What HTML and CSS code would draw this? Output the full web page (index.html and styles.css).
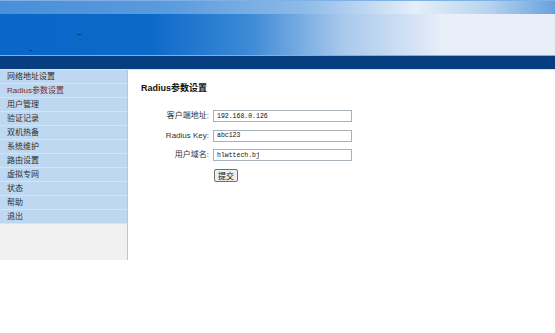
FILE: index.html
```html
<!DOCTYPE html>
<html lang="zh">
  <head>
    <meta charset="UTF-8" />
    <link rel="stylesheet" href="styles.css">
    <title>Radius参数设置</title>
  </head>
  <body>
    <div class="header">
      <div class="header-top"></div>
      <div class="header-main">
        <span class="speck speck-a"></span>
        <span class="speck speck-b"></span>
      </div>
      <div class="header-bar"></div>
    </div>

    <div class="page">
      <div class="sidebar">
        <ul class="menu">
          <li><a href="#">网络地址设置</a></li>
          <li><a href="#" class="visited">Radius参数设置</a></li>
          <li><a href="#">用户管理</a></li>
          <li><a href="#">验证记录</a></li>
          <li><a href="#">双机热备</a></li>
          <li><a href="#">系统维护</a></li>
          <li><a href="#">路由设置</a></li>
          <li><a href="#">虚拟专网</a></li>
          <li><a href="#">状态</a></li>
          <li><a href="#">帮助</a></li>
          <li><a href="#">退出</a></li>
        </ul>
        <div class="sidebar-foot"></div>
      </div>

      <div class="content">
        <h1>Radius参数设置</h1>
        <form class="form">
          <label for="client">客户端地址:</label>
          <input type="text" id="client" value="192.168.0.126" />
          <label for="key">Radius Key:</label>
          <input type="text" id="key" value="abc123" />
          <label for="domain">用户域名:</label>
          <input type="text" id="domain" value="hlwttech.bj" />
          <span></span>
          <div class="actions"><button type="button" class="submit-btn">提交</button></div>
        </form>
      </div>
    </div>
  </body>
</html>
```

FILE: styles.css
```css
body {
  margin: 0;
  padding: 0;
  background-color: white;
  font-family: "Liberation Sans", "Noto Sans CJK SC", sans-serif;
  color: #222;
}

.header-top {
  height: 14px;
  background-image: linear-gradient(
    to right,
    #4a8fd8 0%,
    #5a9ade 30%,
    #8ebbe8 55%,
    #e6eff9 75%,
    #b8d3ef 88%,
    #67a1de 100%
  );
  border-top: 1px solid #7fb0e6;
  box-sizing: border-box;
}

.header-main {
  position: relative;
  height: 41px;
  background-image: linear-gradient(
    to right,
    #0a67c9 0%,
    #0c69c9 27%,
    #3d8ad6 45%,
    #a9c9ec 62%,
    #e8eff9 80%,
    #e8eff9 100%
  );
  border-bottom: 1px solid #9aaabb;
}

.speck {
  position: absolute;
  height: 1px;
  background-color: #123a66;
}

.speck-a {
  left: 77px;
  top: 20px;
  width: 4px;
}

.speck-b {
  left: 29px;
  top: 36px;
  width: 3px;
}

.header-bar {
  height: 13px;
  background-color: #063e80;
  border-bottom: 1px solid #dde3ea;
}

.page {
  display: flex;
}

.sidebar {
  width: 127px;
  border-right: 1px solid #a9c9ea;
  display: flex;
  flex-direction: column;
}

.menu {
  list-style-type: none;
  margin: 0;
  padding: 0;
  background-color: #bed8f1;
}

.menu li {
  height: 13px;
  border-bottom: 1px solid #d3e4f5;
  padding-left: 7px;
  font-size: 8px;
  line-height: 13px;
}

.menu a {
  color: #2e2e2e;
  text-decoration: none;
}

.menu a.visited {
  color: #7b2b2b;
}

.sidebar-foot {
  height: 36px;
  background-color: #f0f0f0;
}

.content {
  flex: 1;
  padding: 12px 0 0 13px;
}

h1 {
  margin: 0 0 16px 0;
  font-size: 9px;
  font-weight: bold;
  line-height: 12px;
  color: #111;
}

.form {
  display: grid;
  grid-template-columns: 68px 139px;
  column-gap: 4px;
  row-gap: 7.5px;
  align-items: center;
}

.form label {
  text-align: right;
  font-size: 8px;
  line-height: 12px;
  color: #333;
}

.form input {
  box-sizing: border-box;
  width: 139px;
  height: 12px;
  margin: 0;
  padding: 0 3px;
  border: 1px solid #a8b0b8;
  font-family: "Liberation Mono", monospace;
  font-size: 6.5px;
  color: #111;
  outline: none;
}

.actions {
  display: flex;
}

.submit-btn {
  margin-left: 1px;
  padding: 0 3px;
  height: 13px;
  font-family: "Noto Sans CJK SC", sans-serif;
  font-size: 8px;
  line-height: 11px;
  background-color: #eeeeee;
  border: 1px solid #707070;
  border-radius: 2px;
  color: #111;
}
```
